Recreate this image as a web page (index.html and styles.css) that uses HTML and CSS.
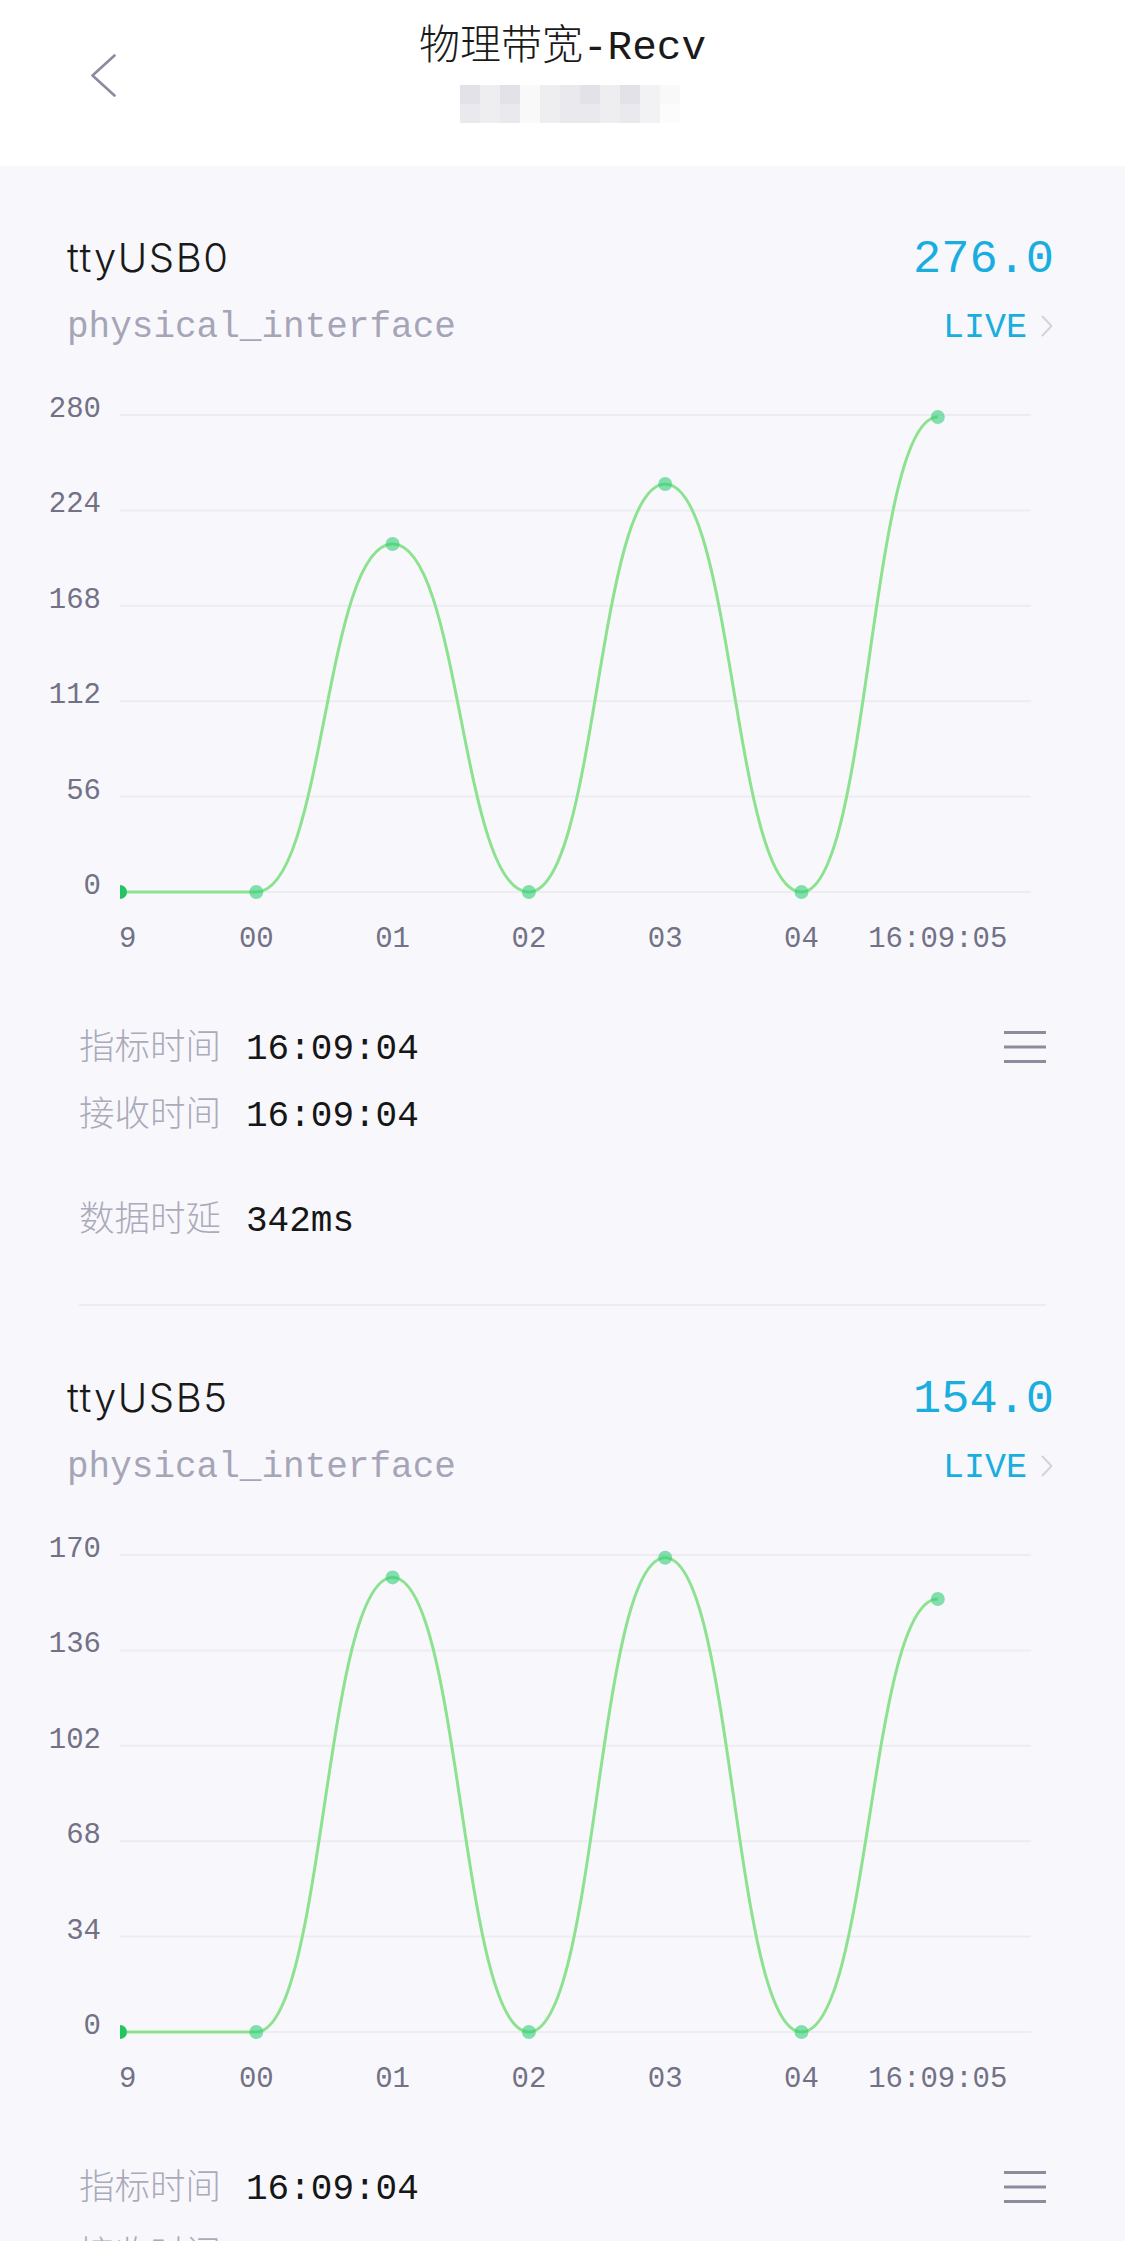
FILE: index.html
```html
<!DOCTYPE html>
<html lang="zh">
<head>
<meta charset="utf-8">
<title>物理带宽-Recv</title>
<link rel="stylesheet" href="styles.css">
</head>
<body>
<header class="topbar">
  <div class="back-col">
    <svg class="back" width="26" height="44" viewBox="0 0 26 44"><path d="M23.5 1.5 L1.5 21.5 L23.5 41.5"/></svg>
  </div>
  <div class="center-col">
    <div class="title">物理带宽-Recv</div>
    <div class="mosaic">
      <i class="c1"></i><i class="c3"></i><i class="c1"></i><i class="c5"></i><i class="c3"></i><i class="c2"></i><i class="c1"></i><i class="c3"></i><i class="c1"></i><i class="c4"></i><i class="c5"></i>
      <i class="c2"></i><i class="c3"></i><i class="c2"></i><i class="c5"></i><i class="c3"></i><i class="c2"></i><i class="c2"></i><i class="c3"></i><i class="c2"></i><i class="c4"></i><i class="c6"></i>
    </div>
  </div>
  <div></div>
</header>

<main>
  <section class="card">
    <div class="card-head">
      <div class="row-title"><span class="name">ttyUSB0</span><span class="value">276.0</span></div>
      <div class="row-sub"><span class="type">physical_interface</span><span class="live">LIVE<svg class="chev" width="14" height="22" viewBox="0 0 14 22"><path d="M2.5 1.5 L11.5 11 L2.5 20.5"/></svg></span></div>
    </div>
    <svg class="chart" width="1125" height="600" viewBox="0 0 1125 600">
      <g class="grid">
        <line x1="120" y1="35" x2="1031" y2="35"/>
        <line x1="120" y1="130.4" x2="1031" y2="130.4"/>
        <line x1="120" y1="225.8" x2="1031" y2="225.8"/>
        <line x1="120" y1="321.2" x2="1031" y2="321.2"/>
        <line x1="120" y1="416.6" x2="1031" y2="416.6"/>
        <line x1="120" y1="512" x2="1031" y2="512"/>
      </g>
      <g class="ylab">
        <text x="101" y="37">280</text>
        <text x="101" y="132.4">224</text>
        <text x="101" y="227.8">168</text>
        <text x="101" y="323.2">112</text>
        <text x="101" y="418.6">56</text>
        <text x="101" y="514">0</text>
      </g>
      <g class="xlab">
        <text x="119" y="566.5" class="first">9</text>
        <text x="256.3" y="566.5">00</text>
        <text x="392.6" y="566.5">01</text>
        <text x="528.9" y="566.5">02</text>
        <text x="665.2" y="566.5">03</text>
        <text x="801.5" y="566.5">04</text>
        <text x="937.8" y="566.5">16:09:05</text>
      </g>
      <path class="line" d="M120 512 L256.3 512 C324.45 512 324.45 164 392.6 164 C460.75 164 460.75 512 528.9 512 C597.05 512 597.05 104 665.2 104 C733.35 104 733.35 512 801.5 512 C869.65 512 869.65 37 937.8 37"/>
      <path class="pt-first" d="M120 505 A7 7 0 0 1 120 519 Z"/>
      <g class="pts">
        <circle cx="256.3" cy="512" r="7"/>
        <circle cx="392.6" cy="164" r="7"/>
        <circle cx="528.9" cy="512" r="7"/>
        <circle cx="665.2" cy="104" r="7"/>
        <circle cx="801.5" cy="512" r="7"/>
        <circle cx="937.8" cy="37" r="7"/>
      </g>
    </svg>
    <div class="details">
      <div class="drow"><span class="dl">指标时间</span><span class="dv">16:09:04</span>
        <svg class="menu" width="42" height="34" viewBox="0 0 42 34"><path d="M0 2.5 H42 M0 17 H42 M0 31.5 H42"/></svg></div>
      <div class="drow r2"><span class="dl">接收时间</span><span class="dv">16:09:04</span></div>
      <div class="drow r3"><span class="dl">数据时延</span><span class="dv">342ms</span></div>
    </div>
    <div class="divider"></div>
  </section>

  <section class="card">
    <div class="card-head">
      <div class="row-title"><span class="name">ttyUSB5</span><span class="value">154.0</span></div>
      <div class="row-sub"><span class="type">physical_interface</span><span class="live">LIVE<svg class="chev" width="14" height="22" viewBox="0 0 14 22"><path d="M2.5 1.5 L11.5 11 L2.5 20.5"/></svg></span></div>
    </div>
    <svg class="chart" width="1125" height="600" viewBox="0 0 1125 600">
      <g class="grid">
        <line x1="120" y1="35" x2="1031" y2="35"/>
        <line x1="120" y1="130.4" x2="1031" y2="130.4"/>
        <line x1="120" y1="225.8" x2="1031" y2="225.8"/>
        <line x1="120" y1="321.2" x2="1031" y2="321.2"/>
        <line x1="120" y1="416.6" x2="1031" y2="416.6"/>
        <line x1="120" y1="512" x2="1031" y2="512"/>
      </g>
      <g class="ylab">
        <text x="101" y="37">170</text>
        <text x="101" y="132.4">136</text>
        <text x="101" y="227.8">102</text>
        <text x="101" y="323.2">68</text>
        <text x="101" y="418.6">34</text>
        <text x="101" y="514">0</text>
      </g>
      <g class="xlab">
        <text x="119" y="566.5" class="first">9</text>
        <text x="256.3" y="566.5">00</text>
        <text x="392.6" y="566.5">01</text>
        <text x="528.9" y="566.5">02</text>
        <text x="665.2" y="566.5">03</text>
        <text x="801.5" y="566.5">04</text>
        <text x="937.8" y="566.5">16:09:05</text>
      </g>
      <path class="line" d="M120 512 L256.3 512 C324.45 512 324.45 57.4 392.6 57.4 C460.75 57.4 460.75 512 528.9 512 C597.05 512 597.05 37.8 665.2 37.8 C733.35 37.8 733.35 512 801.5 512 C869.65 512 869.65 79 937.8 79"/>
      <path class="pt-first" d="M120 505 A7 7 0 0 1 120 519 Z"/>
      <g class="pts">
        <circle cx="256.3" cy="512" r="7"/>
        <circle cx="392.6" cy="57.4" r="7"/>
        <circle cx="528.9" cy="512" r="7"/>
        <circle cx="665.2" cy="37.8" r="7"/>
        <circle cx="801.5" cy="512" r="7"/>
        <circle cx="937.8" cy="79" r="7"/>
      </g>
    </svg>
    <div class="details">
      <div class="drow"><span class="dl">指标时间</span><span class="dv">16:09:04</span>
        <svg class="menu" width="42" height="34" viewBox="0 0 42 34"><path d="M0 2.5 H42 M0 17 H42 M0 31.5 H42"/></svg></div>
      <div class="drow r2"><span class="dl">接收时间</span><span class="dv">16:09:05</span></div>
      <div class="drow r3"><span class="dl">数据时延</span><span class="dv">318ms</span></div>
    </div>
    <div class="divider"></div>
  </section>
</main>
</body>
</html>
```

FILE: styles.css
```css
html, body {
  margin: 0;
  padding: 0;
}
body {
  width: 1125px;
  background: #f8f8fc;
  font-family: "Liberation Mono", "Noto Sans CJK SC", monospace;
  color: #111;
  overflow: hidden;
}

/* ---------- top bar ---------- */
.topbar {
  height: 166px;
  background: #ffffff;
  display: grid;
  grid-template-columns: 1fr auto 1fr;
}
.back-col {
  padding: 54px 0 0 91px;
}
.back {
  display: block;
  fill: none;
  stroke: #8b8aa1;
  stroke-width: 2.6;
  stroke-linecap: round;
  stroke-linejoin: round;
}
.center-col {
  display: flex;
  flex-direction: column;
  align-items: center;
  padding-top: 24px;
}
.title {
  font-family: "Liberation Mono", "Noto Sans CJK SC", monospace;
  font-size: 41px;
  line-height: 48px;
  font-weight: 300;
  color: #1a1a1a;
  white-space: nowrap;
}
.mosaic {
  margin-top: 13px;
  margin-left: 15px;
  display: grid;
  grid-template-columns: repeat(11, 20px);
  grid-template-rows: 19px 19px;
}
.mosaic i { display: block; }
.c1 { background: #e2e2e8; }
.c2 { background: #eaeaee; }
.c3 { background: #eeeef1; }
.c4 { background: #f2f2f4; }
.c5 { background: #f9f9fa; }
.c6 { background: #fcfcfc; }

/* ---------- card ---------- */
.card-head {
  padding: 64px 71px 26px 67px;
}
.row-title {
  height: 56px;
  display: flex;
  justify-content: space-between;
  align-items: baseline;
}
.name {
  font-family: "Inter", "Liberation Sans", sans-serif;
  font-weight: 300;
  font-size: 40px;
  line-height: 56px;
  color: #1a1a1a;
  letter-spacing: 1.6px;
}
.value {
  font-family: "Liberation Mono", monospace;
  font-size: 47px;
  line-height: 56px;
  color: #1aaede;
}
.row-sub {
  margin-top: 16px;
  height: 52px;
  display: flex;
  justify-content: space-between;
  align-items: baseline;
}
.type {
  font-size: 36px;
  line-height: 52px;
  color: #a6a5b8;
}
.live {
  font-size: 35px;
  line-height: 52px;
  color: #1aaede;
}
.chev {
  margin-left: 13px;
  vertical-align: baseline;
  fill: none;
  stroke: #d3d3db;
  stroke-width: 2;
  stroke-linecap: round;
  stroke-linejoin: round;
}

/* ---------- chart ---------- */
.chart {
  display: block;
}
.grid line {
  stroke: #ececf1;
  stroke-width: 2;
}
.ylab text {
  font-family: "Liberation Mono", monospace;
  font-size: 29px;
  fill: #727186;
  text-anchor: end;
}
.xlab text {
  font-family: "Liberation Mono", monospace;
  font-size: 29px;
  fill: #727186;
  text-anchor: middle;
}
.xlab text.first {
  text-anchor: start;
}
.line {
  fill: none;
  stroke: #8ce28f;
  stroke-width: 3;
}
.pts circle {
  fill: #34cf78;
  fill-opacity: 0.6;
}
.pt-first {
  fill: #25c463;
}

/* ---------- details ---------- */
.details {
  padding: 39px 79px 0 79px;
}
.drow {
  height: 50px;
  display: flex;
  align-items: baseline;
}
.drow.r2 { margin-top: 17px; }
.drow.r3 { margin-top: 55px; }
.dl {
  font-family: "Noto Sans CJK SC", sans-serif;
  font-weight: 300;
  font-size: 35.5px;
  line-height: 50px;
  color: #abaabb;
  width: 142px;
  margin-right: 25px;
}
.dv {
  font-family: "Liberation Mono", monospace;
  font-size: 36px;
  line-height: 50px;
  color: #161616;
}
.menu {
  margin-left: auto;
  align-self: flex-start;
  margin-top: 11px;
  fill: none;
  stroke: #8d8c9f;
  stroke-width: 3;
}
.divider {
  margin: 63px 79px 0 79px;
  height: 2px;
  background: #ececf1;
}
```
